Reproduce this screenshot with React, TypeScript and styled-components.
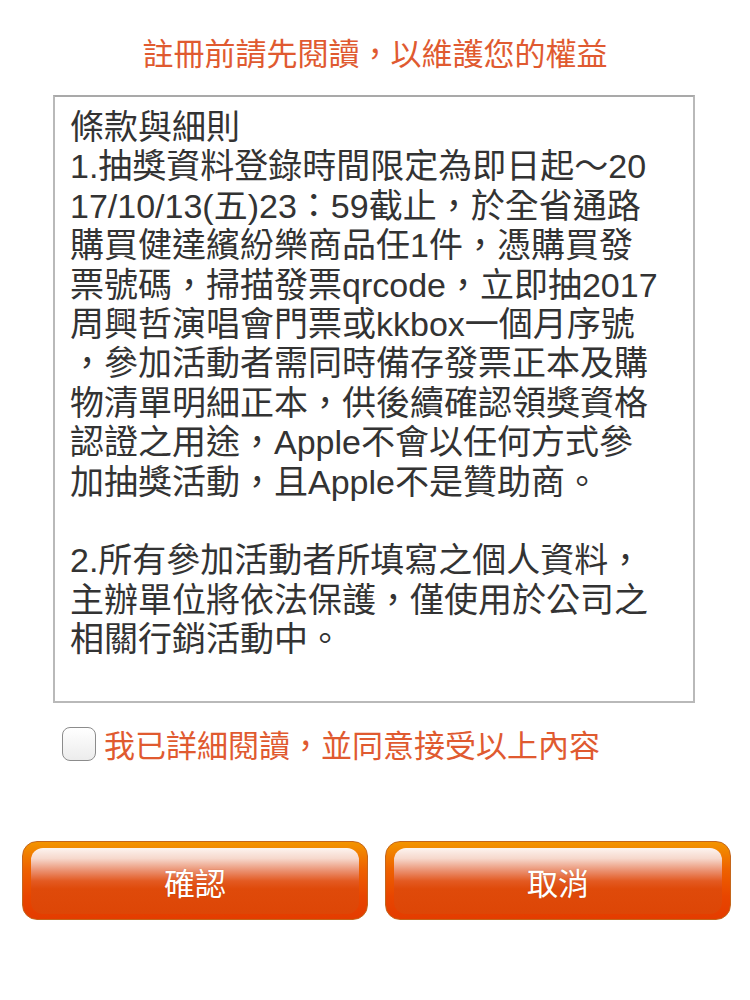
import React from "react";
import styled, { createGlobalStyle } from "styled-components";

const GlobalStyle = createGlobalStyle`
  html, body {
    margin: 0;
    padding: 0;
    background: #ffffff;
  }
  body {
    font-family: "Liberation Sans", "Noto Sans CJK TC", sans-serif;
  }
`;

const Page = styled.div`
  width: 750px;
  min-height: 1000px;
  display: flex;
  flex-direction: column;
  background: #ffffff;
`;

const Title = styled.h1`
  margin: 32px 0 23px;
  font-size: 31px;
  line-height: 40px;
  font-weight: 400;
  text-align: center;
  color: #e05a30;
  font-family: "Noto Sans CJK TC", sans-serif;
`;

const TermsBox = styled.div`
  box-sizing: border-box;
  margin: 0 55px 0 53px;
  height: 608px;
  border: 2px solid #b9b9b9;
  border-top-color: #a9a9a9;
  padding: 11px 0 0 15px;
  overflow: hidden;
  color: #333333;
  font-size: 34px;
  line-height: 39.4px;
  white-space: pre;
`;

const Line = styled.div`
  height: 39.4px;
`;

const AgreeRow = styled.label`
  display: flex;
  align-items: center;
  gap: 8px;
  margin: 24px 0 0 62px;
  height: 34px;
`;

const CheckBox = styled.span`
  box-sizing: border-box;
  width: 34px;
  height: 34px;
  border: 1.5px solid #8c8c8c;
  border-radius: 8px;
  background: linear-gradient(to bottom, #ffffff, #ececec);
  flex: none;
`;

const AgreeText = styled.span`
  font-family: "Noto Sans CJK TC", sans-serif;
  font-size: 31px;
  line-height: 34px;
  color: #e05a30;
`;

const ButtonRow = styled.div`
  display: flex;
  gap: 17px;
  margin: 80px 0 0 22px;
`;

const OrangeButton = styled.button`
  box-sizing: border-box;
  width: 346px;
  height: 79px;
  padding: 6px 8px 5px 8px;
  display: flex;
  border: 1px solid #c4661c;
  border-radius: 15px;
  background: linear-gradient(to bottom, #f39400 0%, #ee6200 35%, #e84600 70%, #e43c00 100%);
  cursor: pointer;
`;

const Gloss = styled.span`
  flex: 1;
  display: flex;
  align-items: center;
  justify-content: center;
  border-radius: 12px;
  background: linear-gradient(
    to bottom,
    #fdf4f0 0%,
    #f6d8cc 16%,
    #eb9272 34%,
    #e35a22 50%,
    #df4a0a 62%,
    #dd4606 100%
  );
  color: #ffffff;
  font-family: "Noto Sans CJK TC", sans-serif;
  font-size: 31px;
  line-height: 1;
  text-shadow: 0 0 1px rgba(120, 40, 0, 0.4);
`;

const terms: string[] = [
  "條款與細則",
  "1.抽獎資料登錄時間限定為即日起～20",
  "17/10/13(五)23：59截止，於全省通路",
  "購買健達繽紛樂商品任1件，憑購買發",
  "票號碼，掃描發票qrcode，立即抽2017",
  "周興哲演唱會門票或kkbox一個月序號",
  "，參加活動者需同時備存發票正本及購",
  "物清單明細正本，供後續確認領獎資格",
  "認證之用途，Apple不會以任何方式參",
  "加抽獎活動，且Apple不是贊助商。",
  "",
  "2.所有參加活動者所填寫之個人資料，",
  "主辦單位將依法保護，僅使用於公司之",
  "相關行銷活動中。",
];

export default function App() {
  return (
    <>
      <GlobalStyle />
      <Page>
        <Title>註冊前請先閱讀，以維護您的權益</Title>
        <TermsBox>
          {terms.map((t, i) => (
            <Line key={i}>{t}</Line>
          ))}
        </TermsBox>
        <AgreeRow>
          <CheckBox />
          <AgreeText>我已詳細閱讀，並同意接受以上內容</AgreeText>
        </AgreeRow>
        <ButtonRow>
          <OrangeButton>
            <Gloss>確認</Gloss>
          </OrangeButton>
          <OrangeButton>
            <Gloss>取消</Gloss>
          </OrangeButton>
        </ButtonRow>
      </Page>
    </>
  );
}
